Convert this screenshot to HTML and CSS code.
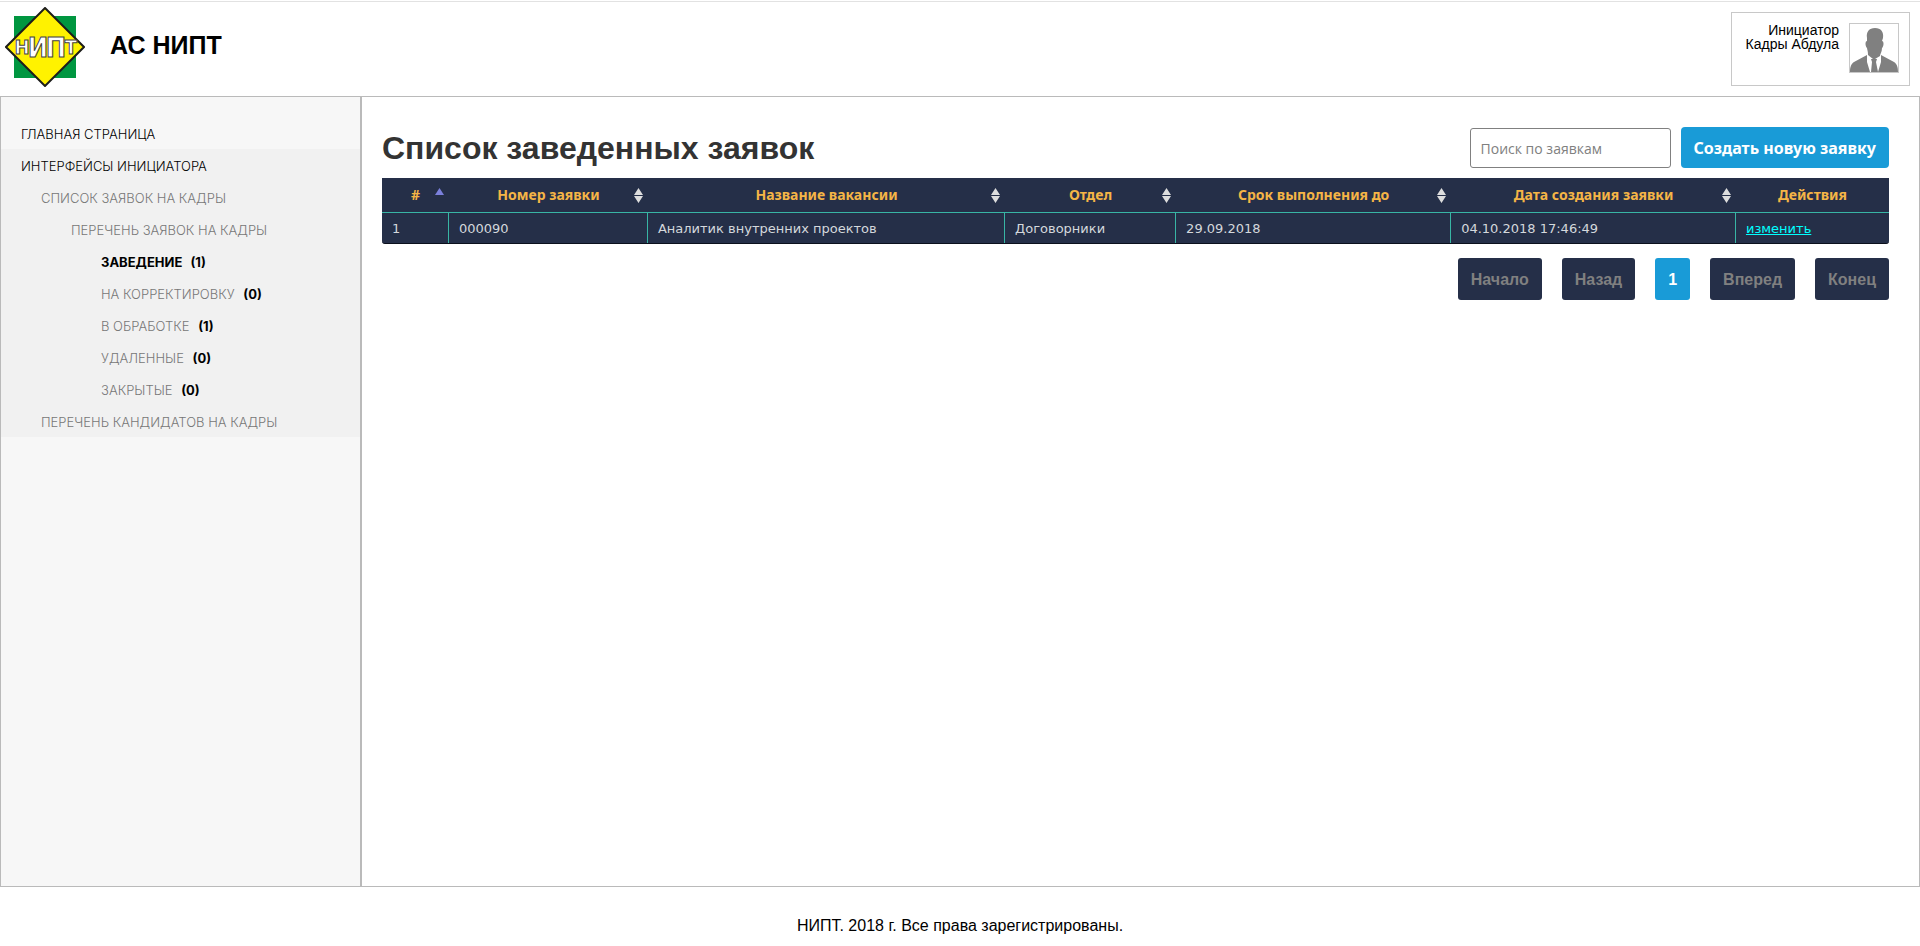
FILE: index.html
```html
<!DOCTYPE html>
<html lang="ru">
<head>
<meta charset="utf-8">
<title>АС НИПТ</title>
<link rel="stylesheet" href="styles.css">
</head>
<body>
<header class="header">
  <a class="brand" href="#">
    <svg class="logo" viewBox="0 0 80 80" role="img" aria-label="НИПТ">
      <rect x="9" y="9" width="62" height="62" fill="#009640"/>
      <path d="M40 1 79 40 40 79 1 40Z" fill="#fff200" stroke="#1d1d1b" stroke-width="2"/>
      <g class="logo-text" text-anchor="middle">
        <text x="17" y="47" font-size="20">Н</text>
        <text x="33" y="50" font-size="27">И</text>
        <text x="51" y="50" font-size="27">П</text>
        <text x="66" y="47" font-size="20">Т</text>
      </g>
    </svg>
    <span class="brand-name">АС НИПТ</span>
  </a>
  <div class="user">
    <div class="user-name">Инициатор<br>Кадры Абдула</div>
    <svg class="avatar" viewBox="0 0 48 48" aria-hidden="true">
      <path d="M0 48C0 43 1 40 4 38L17 31 17 38 20 48ZM48 48C48 43 47 40 44 38L31 31 31 38 28 48ZM21 35H27L26 38 28 48H21L22 38Z" fill="#808080"/>
      <path d="M17 14C16 8 19 4 25 4S34 8 33 14L32 17C34 17 34 22 32 24C32 28 30 30 30 32L25 35H23L18 31C18 27 17 25 17 24C15 22 15 17 17 17Z" fill="#808080"/>
    </svg>
  </div>
</header>
<div class="main">
  <nav class="sidebar">
    <ul class="menu">
      <li><a href="#">Главная страница</a></li>
      <li class="open"><a href="#">Интерфейсы инициатора</a>
        <ul class="level-2">
          <li><a href="#">Список заявок на кадры</a>
            <ul class="level-3">
              <li><a href="#">Перечень заявок на кадры</a>
                <ul class="level-4">
                  <li><a class="current" href="#">Заведение <b>(1)</b></a></li>
                  <li><a href="#">На корректировку <b>(0)</b></a></li>
                  <li><a href="#">В обработке <b>(1)</b></a></li>
                  <li><a href="#">Удаленные <b>(0)</b></a></li>
                  <li><a href="#">Закрытые <b>(0)</b></a></li>
                </ul>
              </li>
            </ul>
          </li>
          <li><a href="#">Перечень кандидатов на кадры</a></li>
        </ul>
      </li>
    </ul>
  </nav>
  <main class="content">
    <div class="toolbar">
      <h1>Список заведенных заявок</h1>
      <input class="search" type="search" placeholder="Поиск по заявкам" aria-label="Поиск по заявкам">
      <button class="create" type="button">Создать новую заявку</button>
    </div>
    <table class="requests">
      <colgroup><col class="c-num"><col class="c-code"><col class="c-name"><col class="c-dept"><col class="c-due"><col class="c-date"><col class="c-act"></colgroup>
      <thead>
        <tr>
          <th class="sort asc">#</th>
          <th class="sort">Номер заявки</th>
          <th class="sort">Название вакансии</th>
          <th class="sort">Отдел</th>
          <th class="sort">Срок выполнения до</th>
          <th class="sort">Дата создания заявки</th>
          <th>Действия</th>
        </tr>
      </thead>
      <tbody>
        <tr>
          <td>1</td>
          <td>000090</td>
          <td>Аналитик внутренних проектов</td>
          <td>Договорники</td>
          <td>29.09.2018</td>
          <td>04.10.2018 17:46:49</td>
          <td><a href="#">изменить</a></td>
        </tr>
      </tbody>
    </table>
    <div class="pager">
      <button type="button">Начало</button>
      <button type="button">Назад</button>
      <button type="button" class="active">1</button>
      <button type="button">Вперед</button>
      <button type="button">Конец</button>
    </div>
  </main>
</div>
<footer class="footer">НИПТ. 2018 г. Все права зарегистрированы.</footer>
</body>
</html>
```
FILE: styles.css
```css
* { box-sizing: border-box; }
body {
  margin: 0;
  min-height: 100vh;
  display: flex;
  flex-direction: column;
  font: 16px/20px "Liberation Sans", Arial, sans-serif;
  color: #000;
  background: #fff;
}
ul { list-style: none; margin: 0; padding: 0; }
.header {
  display: flex;
  justify-content: space-between;
  align-items: flex-start;
  margin-top: 1px;
  border-top: 1px solid #e2e2e2;
  padding: 5px 10px 9px 5px;
}
.brand { display: flex; color: #000; text-decoration: none; }
.logo { width: 80px; height: 80px; }
.logo-text {
  font-family: "DejaVu Sans Condensed", "DejaVu Sans", sans-serif;
  font-weight: bold;
  fill: #fff;
  stroke: #444;
  stroke-width: 1px;
}
.brand-name { margin: 24px 0 0 25px; font-size: 25px; line-height: 28px; font-weight: bold; }
.user {
  display: flex;
  gap: 10px;
  margin-top: 5px;
  padding: 10px 10px 12px 14px;
  border: 1px solid #c8c8c8;
}
.user-name { font-size: 14px; line-height: 14px; text-align: right; }
.avatar { width: 50px; height: 50px; border: 1px solid #c8c8c8; }
.main { flex: 1; display: flex; border: 1px solid #bababa; }
.sidebar { width: 361px; padding-top: 20px; background: #f7f7f7; border-right: 2px solid #bababa; }
.menu { font: 300 13px/30px Inter, "Open Sans", sans-serif; text-transform: uppercase; }
.menu a { display: block; padding: 2px 0 0 20px; color: #000; text-decoration: none; }
.menu .open { background: #f1f1f1; }
.menu .level-2 a { padding-left: 40px; color: #777; }
.menu .level-3 a { padding-left: 70px; }
.menu .level-4 a { padding-left: 100px; }
.menu .level-2 b { margin-left: 5px; color: #000; font-weight: bold; }
.menu .level-4 .current { color: #000; font-weight: bold; }
.content { flex: 1; padding: 30px 30px 0 20px; }
.toolbar { display: flex; align-items: flex-end; margin-bottom: 10px; }
h1 { flex: 1; margin: 0; font-size: 32px; line-height: 40px; color: #333; }
.search {
  width: 201px;
  height: 40px;
  margin-right: 10px;
  padding: 0 10px;
  border: 1px solid #808080;
  border-radius: 3px;
  background: #fff;
  font: 14px "Open Sans", sans-serif;
}
.search::placeholder { color: #808080; }
.create {
  height: 41px;
  padding: 0 13px;
  border: 0;
  border-radius: 4px;
  background: #199bd7;
  color: #fff;
  font: bold 16px "Noto Sans", sans-serif;
}
.requests {
  width: 100%;
  table-layout: fixed;
  border-collapse: separate;
  border-spacing: 0;
  background: #252f48;
  border-bottom: 1px solid #0b101c;
  border-radius: 0 0 3px 3px;
  font: 14px/20px "Noto Sans", sans-serif;
}
.c-num { width: 67px; }
.c-code { width: 13.200%; }
.c-name { width: 23.700%; }
.c-dept { width: 11.350%; }
.c-due { width: 18.250%; }
.c-date { width: 18.900%; }
.requests th { padding: 7px 10px; color: #f5b546; border-bottom: 1px solid #38b5a5; }
.requests .sort {
  background: no-repeat right 5px center / 9px 15px;
  background-image: url("data:image/svg+xml,%3Csvg xmlns='http://www.w3.org/2000/svg' viewBox='0 0 9 15'%3E%3Cpath d='M0 7L4.500 0 9 7ZM0 8L4.500 15 9 8Z' fill='%23ddd'/%3E%3C/svg%3E");
}
.requests .asc {
  background-image: url("data:image/svg+xml,%3Csvg xmlns='http://www.w3.org/2000/svg' viewBox='0 0 9 15'%3E%3Cpath d='M0 7L4.500 0 9 7Z' fill='%237b80dc'/%3E%3C/svg%3E");
}
.requests td {
  padding: 6px 10px 4px;
  color: #d4d8dc;
  border-right: 1px solid #38b5a5;
  font: 13px/20px "DejaVu Sans", sans-serif;
}
.requests td:last-child { border-right: 0; }
.requests a { color: #0ff; }
.pager { display: flex; justify-content: flex-end; gap: 20px; margin-top: 14px; }
.pager button {
  height: 42px;
  padding: 2px 13px 0;
  border: 0;
  border-radius: 3px;
  background: #252f48;
  color: #808080;
  font: bold 16px "Liberation Sans", Arial, sans-serif;
}
.pager .active { background: #199bd7; color: #fff; }
.footer { padding: 29px 0 10px; text-align: center; }
```
